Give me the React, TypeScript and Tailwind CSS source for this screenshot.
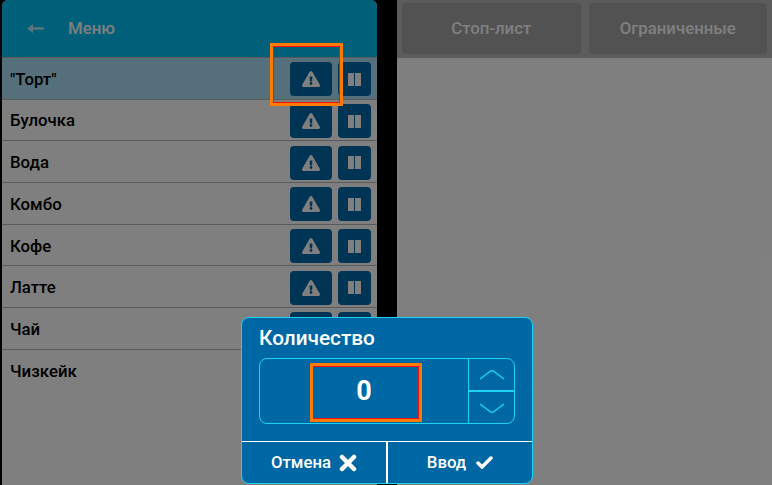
import { FaExclamationTriangle } from "react-icons/fa";

const items = ['"Торт"', "Булочка", "Вода", "Комбо", "Кофе", "Латте", "Чай", "Чизкейк"];

const MenuRow = ({ name, selected, last }: { name: string; selected: boolean; last: boolean }) => (
    <div
        className={`flex h-[41.7px] items-center justify-between pl-2 pr-[6px] pt-[2px] ${last ? "" : "border-b border-[#b4b4b4]"} ${selected ? "bg-[#aae0f4]" : "bg-white"}`}
    >
        <span className="text-[16.8px] font-medium text-black">{name}</span>
        <div className="flex gap-[6px]">
            <button className="flex h-[34px] w-[42px] items-center justify-center rounded-sm bg-[#0068a8] text-white">
                <FaExclamationTriangle className="text-[18px]" />
            </button>
            <button className="flex h-[34px] w-[33px] items-center justify-center rounded-sm bg-[#0068a8]">
                <svg width="13" height="13" viewBox="0 0 13 13" fill="#fff">
                    <rect x="0" y="0" width="6" height="13" />
                    <rect x="7" y="0" width="6" height="13" />
                </svg>
            </button>
        </div>
    </div>
);

export default function App() {
    return (
        <div className="relative flex h-[485px] w-[772px] gap-5 overflow-hidden bg-black pl-[2px] font-['Roboto',sans-serif]">
            <div className="h-full w-[375px] rounded-t-md bg-white">
                <div className="flex h-[58px] items-center gap-[24px] rounded-t-md border-b border-[#b4b4b4] bg-[#00c0f4] pl-[25px] text-white">
                    <svg width="17" height="9" viewBox="0 0 17 9" fill="currentColor" className="opacity-70">
                        <path d="M0 4.500 6 0v3.300h11v2.400H6V9z" />
                    </svg>
                    <span className="text-[16.8px] font-medium">Меню</span>
                </div>
                {items.map((item, i) => (
                    <MenuRow key={item} name={item} selected={i === 0} last={i === items.length - 1} />
                ))}
            </div>
            <div className="h-full w-[375px] bg-white">
                <div className="flex h-[58px] gap-2 bg-[#b8b8b8] p-[3px_5px_4px]">
                    <button className="flex-1 rounded bg-[#a4a4a4] text-[16.8px] font-medium text-white">Стоп-лист</button>
                    <button className="flex-1 rounded bg-[#a4a4a4] text-[16.8px] font-medium text-white">Ограниченные</button>
                </div>
            </div>

            <div className="absolute inset-0 bg-black/50" />
            <div className="absolute left-[270px] top-[43px] h-[63px] w-[73px] border-[3px] border-[#ff7a00] outline outline-1 -outline-offset-4 outline-[#f01010]" />

            <div className="absolute left-[241px] top-[317px] flex h-[167px] w-[292px] flex-col overflow-hidden rounded-lg border border-[#19d3f5] bg-[#0067a5]">
                <div className="flex-1 px-[17px]">
                    <div className="mt-[7px] text-[20.8px] leading-[27px] font-medium text-white">Количество</div>
                    <div className="mt-[6px] flex h-[66px] w-[256px] overflow-hidden rounded-lg border border-[#19d3f5]">
                        <div className="flex flex-1 items-center justify-center text-[27px] font-bold text-white">0</div>
                        <div className="flex w-[46px] flex-col border-l border-[#19d3f5]">
                            <button className="flex flex-1 items-center justify-center border-b-2 border-[#19d3f5]">
                                <svg width="26" height="12" viewBox="0 0 26 12" fill="none" stroke="#19d3f5" strokeWidth="1.500">
                                    <path d="M1 10 11 2.500q2-1.500 4 0L25 10" />
                                </svg>
                            </button>
                            <button className="flex flex-1 items-center justify-center">
                                <svg width="26" height="12" viewBox="0 0 26 12" fill="none" stroke="#19d3f5" strokeWidth="1.500">
                                    <path d="M1 2 11 9.500q2 1.500 4 0L25 2" />
                                </svg>
                            </button>
                        </div>
                    </div>
                </div>
                <div className="flex h-[42px] border-t border-white text-[16.8px] font-medium text-white">
                    <button className="flex w-[144px] items-center justify-center gap-2">
                        Отмена
                        <svg width="18" height="18" viewBox="0 0 18 18" fill="none" stroke="#fff" strokeWidth="4.500" strokeLinecap="round">
                            <path d="M3 3l12 12M15 3 3 15" />
                        </svg>
                    </button>
                    <button className="flex flex-1 items-center justify-center gap-[10px] border-l-2 border-white">
                        Ввод
                        <svg width="17" height="13" viewBox="0 0 17 13" fill="none" stroke="#fff" strokeWidth="3.500" strokeLinecap="round">
                            <path d="M2 7l4 4 9-9" />
                        </svg>
                    </button>
                </div>
            </div>
            <div className="absolute left-[310px] top-[363px] h-[59px] w-[112px] border-[3px] border-[#ff7a00] outline outline-1 -outline-offset-4 outline-[#f01010]" />
        </div>
    );
}
